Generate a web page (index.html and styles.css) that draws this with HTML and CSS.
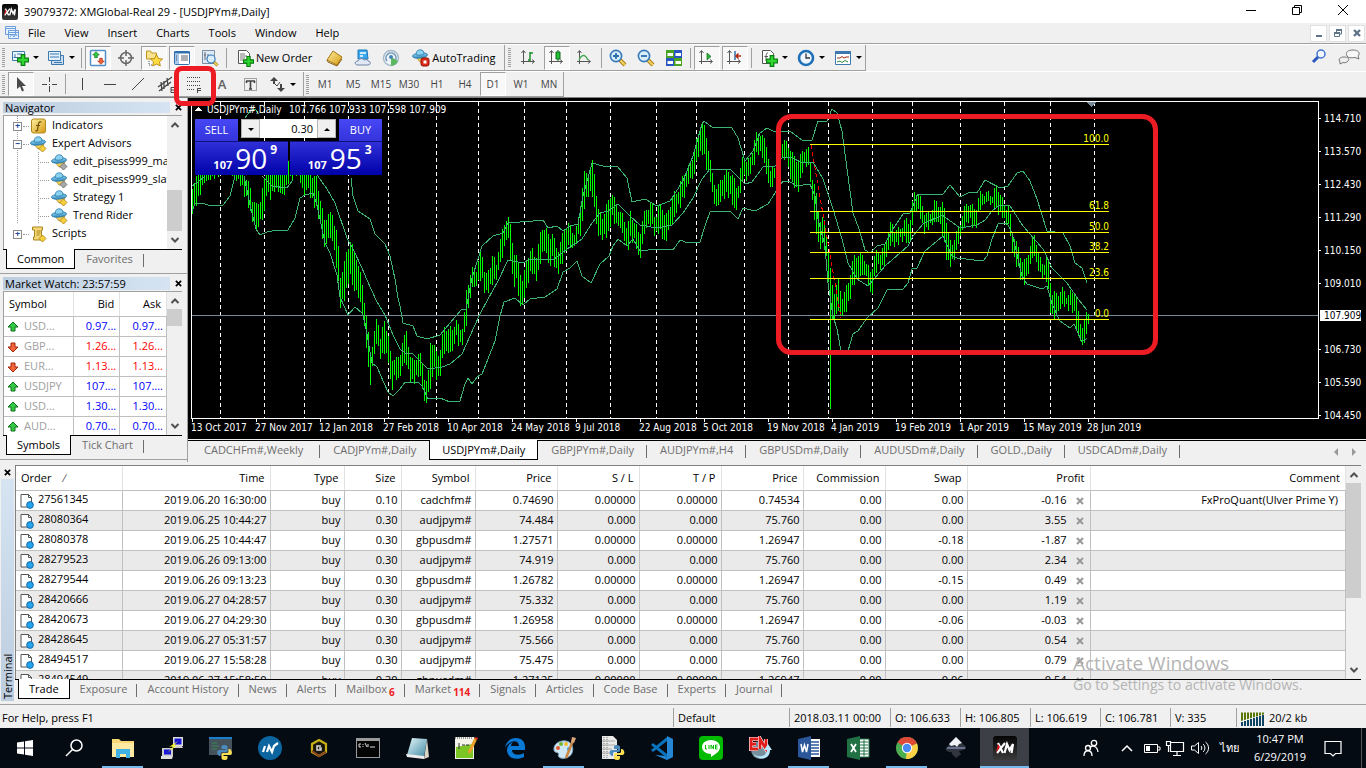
FILE: index.html
```html
<!DOCTYPE html>
<html lang="en">
<head>
	<meta charset="UTF-8">
	<title>39079372: XMGlobal-Real 29 - [USDJPYm#,Daily]</title>
	<link rel="stylesheet" href="styles.css">
</head>
<body>
	<svg class="defs" aria-hidden="true">
		<defs>
			<linearGradient id="g-blue" x2="0" y2="1"><stop offset="0" stop-color="#9bdcf7"/><stop offset="1" stop-color="#2f86bd"/></linearGradient>
			<linearGradient id="g-gold" x2="1" y2="1"><stop offset="0" stop-color="#fdf0a0"/><stop offset="1" stop-color="#d69a12"/></linearGradient>
			<linearGradient id="g-glass" x2="1" y2="1"><stop offset="0" stop-color="#e8f7fc"/><stop offset="1" stop-color="#3e8ba3"/></linearGradient>
			<linearGradient id="g-dark" x2="0" y2="1"><stop offset="0" stop-color="#050505"/><stop offset="1" stop-color="#3a3a3a"/></linearGradient>
		</defs>
		<symbol id="plus" viewBox="0 0 10 10"><path d="M3.500.5h3v3h3v3h-3v3h-3v-3h-3v-3h3z" fill="#2ed82e" stroke="#0b7d12"/></symbol>
		<symbol id="hat" viewBox="0 0 17 16">
			<path d="M4 8l4 5h3l3-5z" fill="#f3cf58" stroke="#a87c16" stroke-width=".7"/>
			<ellipse cx="8" cy="6.500" rx="7.600" ry="2.600" transform="rotate(-6 8 6.500)" fill="url(#g-blue)" stroke="#2477a8" stroke-width=".8"/>
			<path d="M4.300 5.800C4 2 6 .8 8.300.8S12 2 12 5c-2 1.300-6 1.500-7.700.8z" fill="#8bd2f1" stroke="#2477a8" stroke-width=".8"/>
		</symbol>
		<symbol id="hat-gold" viewBox="0 0 17 16"><use href="#hat"/><path d="M12.500 9l3.500 3.500-3.500 3.500L9 12.500z" fill="#f6d13c" stroke="#a67c12" stroke-width=".8"/></symbol>
		<symbol id="hat-gray" viewBox="0 0 17 16"><use href="#hat"/><path d="M12.500 9l3.500 3.500-3.500 3.500L9 12.500z" fill="#a9a9a9" stroke="#666" stroke-width=".8"/></symbol>
		<symbol id="lens" viewBox="0 0 18 18">
			<path d="M11 11l5 5" stroke="#a87a10" stroke-width="4"/><path d="M11 11l5 5" stroke="#f3d261" stroke-width="2.200"/>
			<circle cx="7" cy="7" r="5.600" fill="#d9eefb" stroke="#3579ba" stroke-width="1.600"/>
		</symbol>
		<symbol id="axes" viewBox="0 0 16 16"><path d="M3.500 2v13M1 12.500h13M1.500 4l2-2.500 2 2.500M12 10.500l2.500 2-2.500 2" fill="none" stroke="#555"/></symbol>
		<symbol id="up" viewBox="0 0 12 12"><path d="M6 1l5 5H8v4H4V6H1z" fill="#35c943" stroke="#08711b"/></symbol>
		<symbol id="down" viewBox="0 0 12 12"><path d="M6 11L1 6h3V2h4v4h3z" fill="#f4663a" stroke="#a12408"/></symbol>
		<symbol id="doc" viewBox="0 0 16 16">
			<path d="M2 1.500h7.500l3 3V14H2z" fill="#fff" stroke="#555"/><path d="M9.500 1.500v3h3" fill="none" stroke="#555"/>
			<circle cx="11" cy="12" r="3.400" fill="#27a3ee" stroke="#0c5d98" stroke-width=".8"/>
		</symbol>
		<symbol id="x" viewBox="0 0 8 8"><path d="M1 1l6 6M7 1L1 7" stroke="currentColor" stroke-width="2"/></symbol>
		<symbol id="chev-up" viewBox="0 0 10 8"><path d="M1.500 6L5 2.500 8.500 6" fill="none" stroke="#505050" stroke-width="2"/></symbol>
		<symbol id="chev-down" viewBox="0 0 10 8"><path d="M1.500 2L5 5.500 8.500 2" fill="none" stroke="#505050" stroke-width="2"/></symbol>
		<symbol id="python" viewBox="0 0 16 16">
			<path d="M8 1c-3 0-3 1-3 3v1h4v1H3C1 6 0 8 1 10s2 2 3 2V9.500C4 8 5 8 6 8h3c2 0 2-1 2-2V3c0-1-1-2-3-2z" fill="#4b8bbe"/>
			<path d="M8 16c3 0 3-1 3-3v-1H7v-1h6c2 0 3-2 2-4s-2-2-3-2v2.500C12 9 11 9 10 9H7c-2 0-2 1-2 2v3c0 1 1 2 3 2z" fill="#ffe052"/>
		</symbol>
		<symbol id="xm" viewBox="0 0 24 24">
			<rect width="24" height="24" rx="3" fill="url(#g-dark)"/>
			<path d="M5 7l5 10M12 7L4 17" stroke="#fff" stroke-width="2.200"/><path d="M3 17L5 8l2 3z" fill="#e0161e"/>
			<path d="M11.500 17L14 8l2.500 6L20 8l-1.500 9" fill="none" stroke="#fff" stroke-width="2.200"/>
		</symbol>
	</svg>

	<header class="titlebar">
		<svg class="i16"><use href="#xm"/></svg>
		<h1>39079372: XMGlobal-Real 29 - [USDJPYm#,Daily]</h1>
		<button aria-label="Minimize"><svg viewBox="0 0 12 12"><path d="M1 6.500h10" stroke="#000"/></svg></button>
		<button aria-label="Restore"><svg viewBox="0 0 12 12"><path d="M1.500 3.500h7v7h-7zM3.500 3V1.500h7v7H9" fill="none" stroke="#000"/></svg></button>
		<button aria-label="Close"><svg viewBox="0 0 12 12"><path d="M1 1l10 10M11 1L1 11" stroke="#000"/></svg></button>
	</header>

	<nav class="menubar">
		<svg class="i16" viewBox="0 0 16 16"><path d="M1.500 1.500h10v8h-10zM4.500 5.500h10v8h-10z" fill="#e8f2fd" stroke="#6d9fde"/><path d="M1.500 3.500h10M4.500 7.500h10M6 12l2-3 2 3 2-3 1 2" fill="none" stroke="#6d9fde"/></svg>
		<button>File</button><button>View</button><button>Insert</button><button>Charts</button><button>Tools</button><button>Window</button><button>Help</button>
		<span class="child-controls">
			<button aria-label="Minimize chart"><svg viewBox="0 0 10 10"><path d="M2 8h6" stroke="#5f7488" stroke-width="2"/></svg></button>
			<button aria-label="Restore chart"><svg viewBox="0 0 10 10"><path d="M1.500 4.500h5v4h-5zM3.500 4V2h5v4H7" fill="none" stroke="#5f7488"/><path d="M1 5h6M3 2h6" stroke="#5f7488" stroke-width="2"/></svg></button>
			<button aria-label="Close chart"><svg viewBox="0 0 10 10"><path d="M2 2l6 6M8 2L2 8" stroke="#5f7488" stroke-width="2.400"/></svg></button>
		</span>
	</nav>

	<div class="toolbar">
		<div class="group">
			<i class="grip"></i>
			<button class="drop" aria-label="New chart"><svg viewBox="0 0 18 18"><path d="M1.500 2.500h12v9h-12z" fill="#eef6fd" stroke="#3d79ae"/><path d="M4 5v4M2.500 8.500H11M6 5h5" stroke="#3d79ae"/><use href="#plus" x="6" y="5" width="12" height="12"/></svg></button>
			<button class="drop" aria-label="Profiles"><svg viewBox="0 0 18 18"><path d="M4.500 6.500h12v9h-12z" fill="#c9def1" stroke="#3d79ae"/><path d="M1.500 2.500h12v9h-12z" fill="#e4f1fc" stroke="#3d79ae"/><path d="M3 5h9M3 8h9M7 13.500h8" stroke="#3d79ae"/></svg></button>
			<i class="sep"></i>
			<button class="on" aria-label="Market Watch"><svg viewBox="0 0 18 18"><rect x="1.500" y="1.500" width="15" height="15" rx="1" fill="#fff" stroke="#4f8fca" stroke-width="1.500"/><use href="#up" x="3" y="2" width="8" height="8"/><use href="#down" x="8" y="8" width="8" height="8"/></svg></button>
			<button aria-label="Data Window"><svg viewBox="0 0 18 18"><circle cx="9" cy="9" r="5.500" fill="none" stroke="#666" stroke-width="1.500"/><path d="M9 1v6M9 11v6M1 9h6M11 9h6" stroke="#666" stroke-width="1.500"/></svg></button>
			<button class="on" aria-label="Navigator"><svg viewBox="0 0 18 18"><path d="M1.500 2v8h10V4h-5l-1-2z" fill="#f9e48d" stroke="#bd9522"/><path d="M4 12v4M4 16h3" stroke="#555" stroke-dasharray="1 1"/><path d="M11.500 5.500l2 4 4 .5-3 2.800.8 4.200-3.800-2-3.800 2 .8-4.200-3-2.800 4-.5z" fill="#ffd942" stroke="#b28812" stroke-width=".9"/></svg></button>
			<button class="on" aria-label="Terminal"><svg viewBox="0 0 18 18"><rect x="1.500" y="2.500" width="15" height="13" rx="1" fill="#fff" stroke="#2f6fae"/><path d="M1 3.500h16" stroke="#2f6fae" stroke-width="2"/><path d="M2 5h4v10H2z" fill="#a9c8ea"/><path d="M3 7h1M3 9h1M3 11h1M8 7h7M8 9h7M8 11h7" stroke="#334" stroke-width=".8"/></svg></button>
			<button aria-label="Strategy Tester"><svg viewBox="0 0 18 18"><path d="M1.500 1.500h12v13h-12z" fill="#dde9f4" stroke="#7b8fa3"/><path d="M4 3v8M7 5v7M3 6h2M6 8h2" stroke="#667"/><use href="#lens" x="5" y="5" width="13" height="13"/></svg></button>
			<i class="sep"></i>
			<button class="wide"><svg viewBox="0 0 18 18"><path d="M2.500 1.500h8l3 3v10h-11z" fill="#fff" stroke="#555"/><path d="M4 5h5M4 7h7M4 9h5M4 11h3" stroke="#777"/><use href="#plus" x="7" y="7" width="11" height="11"/></svg>New Order</button>
			<button aria-label="MetaEditor"><svg viewBox="0 0 18 18"><path d="M1 11L7 2l9 6-5 8z" fill="url(#g-gold)" stroke="#a87713"/><path d="M1 11l1 2 9 4 5-7" fill="none" stroke="#8b5e0a"/></svg></button>
			<button aria-label="MQL5 cloud"><svg viewBox="0 0 18 18"><path d="M4 1h9l1 9H4z" fill="#3aa8ef" stroke="#1c78b8"/><path d="M6 4h6M6 7h3" stroke="#fff" stroke-width="1.500"/><path d="M3 16c-3-1-2-4 1-4 1-3 5-3 6-1 3-1 4 0 4 1 3 0 3 4 0 4z" fill="#dfe8f4" stroke="#6d83a3"/></svg></button>
			<button aria-label="Signals"><svg viewBox="0 0 18 18"><circle cx="9" cy="9" r="7.500" fill="#edf3f7" stroke="#a5b8c8" stroke-width="1.400"/><path d="M5 12a5 5 0 1 1 8 0" fill="none" stroke="#6e93b1" stroke-width="1.500"/><path d="M9 8v9a8 8 0 0 0 7-5z" fill="#5cb860"/><circle cx="9" cy="8" r="2" fill="#4585b5"/></svg></button>
			<button class="wide"><svg viewBox="0 0 18 18"><use href="#hat" width="17" height="16"/><rect x="9" y="9" width="8" height="8" rx="2" fill="#dc2a18" stroke="#991008"/><path d="M11.500 11.500h3v3h-3z" fill="#fff"/></svg>AutoTrading</button>
		</div>
		<div class="group chart-tools">
			<i class="grip"></i>
			<button aria-label="Bar chart"><svg viewBox="0 0 18 18"><use href="#axes" width="16" height="16"/><path d="M10 3v9M10 4h3M8 11h2" stroke="#1b8a2a" stroke-width="1.500"/></svg></button>
			<button class="on" aria-label="Candlesticks"><svg viewBox="0 0 18 18"><use href="#axes" width="16" height="16"/><path d="M10 1v11" stroke="#11671d"/><path d="M8 3h4v7H8z" fill="#21c435" stroke="#11671d"/></svg></button>
			<button aria-label="Line chart"><svg viewBox="0 0 18 18"><use href="#axes" width="16" height="16"/><path d="M3 11c3-6 6-6 9 0" fill="none" stroke="#46a852" stroke-width="1.400"/></svg></button>
			<i class="sep"></i>
			<button aria-label="Zoom in"><svg viewBox="0 0 18 18"><use href="#lens"/><path d="M4 7h6M7 4v6" stroke="#2c6ead" stroke-width="1.800"/></svg></button>
			<button aria-label="Zoom out"><svg viewBox="0 0 18 18"><use href="#lens"/><path d="M4 7h6" stroke="#2c6ead" stroke-width="1.800"/></svg></button>
			<button aria-label="Tile windows"><svg viewBox="0 0 18 18"><path d="M1 1h8v8H1zM9 9h8v8H9z" fill="#4ba322"/><path d="M9 1h8v8H9zM1 9h8v8H1z" fill="#2855c0"/><path d="M2.500 4H8v3H2.500zM10.500 4H16v3h-5.500zM2.500 12H8v3H2.500zM10.500 12H16v3h-5.500z" fill="#fff"/></svg></button>
			<i class="sep"></i>
			<button class="on" aria-label="Auto scroll"><svg viewBox="0 0 18 18"><use href="#axes" width="16" height="16"/><path d="M9 4v7l4-3.500z" fill="#29b83c" stroke="#11671d" stroke-width=".7"/></svg></button>
			<button class="on" aria-label="Chart shift"><svg viewBox="0 0 18 18"><use href="#axes" width="16" height="16"/><path d="M9 2v9" stroke="#2c6ead" stroke-width="1.500"/><path d="M15 7h-5M12.500 4.500L10 7l2.500 2.500" fill="none" stroke="#b5250b" stroke-width="1.500"/></svg></button>
			<i class="sep"></i>
			<button class="drop" aria-label="Indicators"><svg viewBox="0 0 18 18"><path d="M2.500 1.500h8l3 3v10h-11z" fill="#fff" stroke="#555"/><path d="M8 4c-2 0-2 1-2 8M4.500 7.500H8" fill="none" stroke="#555"/><use href="#plus" x="6" y="6" width="12" height="12"/></svg></button>
			<button class="drop" aria-label="Periods"><svg viewBox="0 0 18 18"><circle cx="9" cy="9" r="7" fill="#eef5fc" stroke="#1e6fb8" stroke-width="2.600"/><path d="M9 4.500V9h4" fill="none" stroke="#333" stroke-width="1.300"/></svg></button>
			<button class="drop" aria-label="Templates"><svg viewBox="0 0 18 18"><path d="M1.500 2.500h15v13h-15z" fill="#fff" stroke="#3d79ae"/><path d="M1 3.500h16" stroke="#3d79ae" stroke-width="3"/><path d="M3 9h3l2-1.500L10 9l2-1h3" fill="none" stroke="#a02b12"/><path d="M3 13l3-1 2 1.500 3-2 3 1.500" fill="none" stroke="#2a8a38"/></svg></button>
		</div>
		<span class="search-tools">
			<button aria-label="Search"><svg viewBox="0 0 18 18"><circle cx="11" cy="6" r="4" fill="#f4f8ff" stroke="#4173d2" stroke-width="1.500"/><path d="M8 9l-5 5" stroke="#2b56bb" stroke-width="3"/></svg></button>
			<button class="chat" aria-label="Chat"><svg viewBox="0 0 22 18"><path d="M9 8c-2-4 1-6 6-6s8 3 5 6l1 3-4-1.500c-4 .5-7 .5-8-1.500z" fill="#f8f8f8" stroke="#777"/><path d="M2 14c-2-3 0-5 4-5s6 2 4 4-4 2-5 1.500L2 16z" fill="#eee" stroke="#777"/></svg></button>
		</span>
	</div>

	<div class="toolbar drawing">
		<div class="group">
			<i class="grip"></i>
			<button class="on" aria-label="Cursor"><svg viewBox="0 0 18 18"><path d="M5 2v12l3-2.500 2 5 2-1-2-4.500h4z" fill="#4a4a4a"/></svg></button>
			<button aria-label="Crosshair"><svg viewBox="0 0 18 18"><path d="M9.500 2v5M9.500 11v6M2 9.500h5M12 9.500h5M9 9.500h1" stroke="#444"/></svg></button>
			<i class="sep"></i>
			<button aria-label="Vertical line"><svg viewBox="0 0 18 18"><path d="M9.500 3v12" stroke="#444"/></svg></button>
			<button aria-label="Horizontal line"><svg viewBox="0 0 18 18"><path d="M3 9.500h12" stroke="#444"/></svg></button>
			<button aria-label="Trendline"><svg viewBox="0 0 18 18"><path d="M3 15L15 3" stroke="#444"/></svg></button>
			<button aria-label="Channel"><svg viewBox="0 0 18 18"><path d="M1 12L15 2M2 16L14 7M4 7l1 9M7 6v8M10 3l1 8" stroke="#444" stroke-width="1.300" fill="none"/><path d="M17 12.500h-3v5h3M14 15h3" stroke="#444" fill="none"/></svg></button>
			<button class="marked" aria-label="Fibonacci retracement"><svg viewBox="0 0 18 18"><path d="M2 2.500h14M2 6.500h14M2 10.500h14M2 14.500h8" stroke="#444" stroke-dasharray="1 1"/><path d="M16 13.500h-3.500v4.500M13 15.500h3" fill="none" stroke="#444"/></svg></button>
			<button class="letter">A</button>
			<button class="label-tool" aria-label="Text label"><svg viewBox="0 0 18 18"><path d="M3.500 3.500h12v12h-12z" fill="none" stroke="#555" stroke-dasharray="1 1"/><path d="M5 6h9M9.500 6v8M5.500 6v2M13.500 6v2M8 14h3" stroke="#444" stroke-width="1.600"/></svg></button>
			<button class="drop" aria-label="Arrows"><svg viewBox="0 0 18 18"><path d="M2 6l4-4 4 4H7v3H5V6zM9 13h3V9h2v4h3l-4 4z" fill="#444"/><path d="M7 9l2 2 3-4" fill="none" stroke="#444"/></svg></button>
		</div>
		<div class="group">
			<i class="grip"></i>
			<button>M1</button><button>M5</button><button>M15</button><button>M30</button><button>H1</button><button>H4</button><button class="on">D1</button><button>W1</button><button>MN</button>
		</div>
	</div>

	<main class="workspace">
		<aside class="dock">
			<section class="panel navigator">
				<div class="caption"><h2>Navigator</h2><button aria-label="Close Navigator"><svg><use href="#x"/></svg></button></div>
				<div class="panel-body">
					<ul class="tree">
						<li><b class="box">+</b><svg viewBox="0 0 16 16"><rect x="1" y="1" width="14" height="14" rx="2" fill="url(#g-gold)" stroke="#b18a1c"/><path d="M11 4c-3-1-3 1-4 8-.4 1-1 1-2 .6M5.500 7.500h4" fill="none" stroke="#6d5208" stroke-width="1.200"/></svg>Indicators</li>
						<li><b class="box">−</b><svg><use href="#hat-gold"/></svg>Expert Advisors
							<ul>
								<li><svg><use href="#hat-gray"/></svg>edit_pisess999_macd</li>
								<li><svg><use href="#hat-gray"/></svg>edit_pisess999_slave</li>
								<li><svg><use href="#hat-gold"/></svg>Strategy 1</li>
								<li><svg><use href="#hat-gold"/></svg>Trend Rider</li>
							</ul>
						</li>
						<li><b class="box">+</b><svg viewBox="0 0 16 16"><path d="M2 1h10v3h-1v7h2v3H3v-3h1V4H2z" fill="#f5d873" stroke="#a98422"/><path d="M6 5h4M6 7h4M6 9h3" stroke="#a98422"/><path d="M12 9l3.500 3.500L12 16l-3.500-3.500z" fill="#f6d13c" stroke="#a67c12" stroke-width=".8"/></svg>Scripts</li>
					</ul>
					<div class="scroll nav-scroll"><svg><use href="#chev-up"/></svg><i></i><svg><use href="#chev-down"/></svg></div>
				</div>
				<div class="tabs"><button class="active">Common</button><button>Favorites</button></div>
			</section>
			<section class="panel market">
				<div class="caption"><h2>Market Watch: 23:57:59</h2><button aria-label="Close Market Watch"><svg><use href="#x"/></svg></button></div>
				<div class="panel-body">
					<div class="clip">
						<table class="quotes">
							<thead><tr><th>Symbol</th><th>Bid</th><th>Ask</th></tr></thead>
							<tbody id="quotes"></tbody>
						</table>
					</div>
					<div class="scroll mw-scroll"><svg><use href="#chev-up"/></svg><i></i><svg><use href="#chev-down"/></svg></div>
				</div>
				<div class="tabs"><button class="active">Symbols</button><button>Tick Chart</button></div>
			</section>
		</aside>

		<section class="chart-area">
			<div class="chart">
				<svg id="chart" viewBox="189 98 1177 341" preserveAspectRatio="xMinYMin meet" role="img" aria-label="USDJPYm# daily chart"></svg>
				<div class="one-click">
					<button class="side">SELL</button>
					<div class="lots">
						<button aria-label="Less"><svg viewBox="0 0 6 3"><path d="M0 0h6L3 3z"/></svg></button><input type="text" value="0.30" aria-label="Volume"><button aria-label="More"><svg viewBox="0 0 6 3"><path d="M0 3h6L3 0z"/></svg></button>
					</div>
					<button class="side">BUY</button>
					<div class="prices">
						<button><b>107</b><span>90</span><sup>9</sup></button>
						<button><b>107</b><span>95</span><sup>3</sup></button>
					</div>
				</div>
			</div>
			<div class="tabs chart-tabs">
				<button>CADCHFm#,Weekly</button><button class="before">CADJPYm#,Daily</button><button class="active">USDJPYm#,Daily</button><button>GBPJPYm#,Daily</button><button>AUDJPYm#,H4</button><button>GBPUSDm#,Daily</button><button>AUDUSDm#,Daily</button><button>GOLD.,Daily</button><button>USDCADm#,Daily</button>
				<span class="pager">
					<button aria-label="Previous tab"><svg viewBox="0 0 5 8"><path d="M5 0v8L1 4z" fill="#999"/></svg></button>
					<button aria-label="Next tab"><svg viewBox="0 0 5 8"><path d="M0 0v8l4-4z" fill="#999"/></svg></button>
				</span>
			</div>
		</section>
	</main>

	<section class="terminal">
		<div class="spine"><button aria-label="Close Terminal"><svg><use href="#x"/></svg></button><h2>Terminal</h2></div>
		<div class="terminal-main">
			<div class="orders-wrap">
				<div class="clip">
					<table class="orders">
						<colgroup><col class="c-order"><col class="c-time"><col class="c-type"><col class="c-size"><col class="c-type"><col class="c-num"><col class="c-num"><col class="c-num"><col class="c-num"><col class="c-num"><col class="c-num"><col class="c-profit"><col></colgroup>
						<thead><tr><th>Order <i>∕</i></th><th>Time</th><th>Type</th><th>Size</th><th>Symbol</th><th>Price</th><th>S / L</th><th>T / P</th><th>Price</th><th>Commission</th><th>Swap</th><th>Profit</th><th>Comment</th></tr></thead>
						<tbody id="orders"></tbody>
					</table>
				</div>
				<div class="scroll term-scroll"><svg><use href="#chev-up"/></svg><i></i><svg><use href="#chev-down"/></svg></div>
			</div>
			<div class="tabs">
				<button class="active">Trade</button><button>Exposure</button><button>Account History</button><button>News</button><button>Alerts</button><button>Mailbox<sub>6</sub></button><button>Market<sub>114</sub></button><button>Signals</button><button>Articles</button><button>Code Base</button><button>Experts</button><button>Journal</button>
			</div>
			<div class="watermark"><p>Activate Windows</p><p>Go to Settings to activate Windows.</p></div>
		</div>
	</section>

	<footer class="statusbar">
		<span class="help">For Help, press F1</span>
		<span class="profile">Default</span>
		<span class="time">2018.03.11 00:00</span>
		<span class="ohlc">O: 106.633</span>
		<span class="ohlc">H: 106.805</span>
		<span class="ohlc">L: 106.619</span>
		<span class="ohlc">C: 106.781</span>
		<span class="vol">V: 335</span>
		<span class="traffic"><svg viewBox="0 0 24 14"><path d="M0 5h23" stroke="#577700" stroke-width="9" stroke-dasharray="2 1"/><path d="M0 9L24 2v12H0z" fill="#f0f0f0"/><path d="M1 14V10M4 14V9M7 14V8M10 14V7M13 14V6M16 14V5M19 14V4M22 14V3" stroke="#0e4463" stroke-width="2"/></svg>20/2 kb</span>
	</footer>

	<nav class="taskbar">
		<button aria-label="Start"><svg viewBox="0 0 24 24"><path d="M4 6.500l7-1v6H4zM12 5.300l8-1.300v7.500h-8zM4 12.500h7v6l-7-1zM12 12.500h8V20l-8-1.300z" fill="#fff"/></svg></button>
		<button aria-label="Search"><svg viewBox="0 0 24 24"><circle cx="14.500" cy="9.500" r="5.500" fill="none" stroke="#fff" stroke-width="1.500"/><path d="M10.500 13.500L4 20" stroke="#fff" stroke-width="1.500"/></svg></button>
		<button class="run" aria-label="File Explorer"><svg viewBox="0 0 24 24"><path d="M1 3h7l2 2h13v16H1z" fill="#f7d774"/><path d="M1 7h22v14H1z" fill="#ffe9a2"/><path d="M5 22v-9h14v9h-4v-4H9v4z" fill="#3fb1e5"/></svg></button>
		<button aria-label="PuTTY"><svg viewBox="0 0 24 24"><path d="M13 1h10v9H13z" fill="#ddd"/><path d="M14.500 2.500h7v6h-7z" fill="#1717d5"/><path d="M12 10h10l1 2H13zM2 12h11v8H2z" fill="#ccc"/><path d="M4 13.500h7v5H4z" fill="#1717d5"/><path d="M1 20h12l-1 3H1z" fill="#ddd"/><path d="M18 5l-9 6 5-1-7 7 10-8-4 1z" fill="#ff0"/></svg></button>
		<button aria-label="Python IDE"><svg viewBox="0 0 24 24"><path d="M0 1h23v18H0z" fill="#45525b"/><path d="M0 1h23v2H0z" fill="#1681d0"/><path d="M3 7h5M3 10h7M3 13h5" stroke="#348a50"/><use href="#python" x="7" y="8" width="17" height="16"/></svg></button>
		<button aria-label="Network"><svg viewBox="0 0 24 24"><circle cx="12" cy="12" r="12" fill="#0c659f"/><path d="M5 16l2-6M9 16l2-6 3 6 2-6 4-3" fill="none" stroke="#fff" stroke-width="2.200"/></svg></button>
		<button aria-label="Wallet"><svg viewBox="0 0 24 24"><path d="M12 4l7 4v8l-7 4-7-4V8z" fill="#18150c" stroke="#c7b014" stroke-width="2.200"/><path d="M5 15l7 5 7-4" fill="none" stroke="#8a4220" stroke-width="2"/><path d="M14 10h-4v4h4v-2h-2" fill="none" stroke="#ddd" stroke-width="1.500"/></svg></button>
		<button aria-label="Command Prompt"><svg viewBox="0 0 24 24"><path d="M0 2h24v20H0z" fill="#9b9b9b"/><path d="M1 5h22v16H1z" fill="#050505"/><path d="M5 8H3v3h2M7 8v1M7 10v1M9 7l2 4M12 8v3M14 11h5" fill="none" stroke="#ddd"/></svg></button>
		<button aria-label="Notepad"><svg viewBox="0 0 24 24"><path d="M7 2l15 1-3 18-17-2z" fill="url(#g-glass)"/><path d="M22 3l2 18-5 2z" fill="#d9d6c7"/><path d="M1 18l18 2v3L2 21z" fill="#eee"/></svg></button>
		<button aria-label="Notepad++"><svg viewBox="0 0 24 24"><path d="M1 1h19v22H1z" fill="#f3f3e9"/><path d="M2 11l17-3v14H2z" fill="#7bc625"/><path d="M1 2h18" stroke="#999" stroke-width="2" stroke-dasharray="1 1"/><path d="M5 7v6M8 9h3M12 9h3" stroke="#333"/><path d="M22 2l-7 15" stroke="#e8a12b" stroke-width="3"/><path d="M22 1l2 1-1 2-2-1z" fill="#d22"/></svg></button>
		<button aria-label="Edge"><svg viewBox="0 0 24 24"><path d="M2 12C3 5 8 2 13 2c6 0 9 4 9 9v3H9c0 5 7 6 12 3v4c-8 4-17 1-17-7 0-4 3-7 6-8-1 1-2 3-2 4h8c0-6-9-7-14 2z" fill="#0a78d5"/></svg></button>
		<button class="run" aria-label="Paint"><svg viewBox="0 0 24 24"><path d="M2 14C1 8 8 4 14 5s8 7 6 12-10 7-13 4c-2-2 1-3-1-4s-4-1-4-3z" fill="#cfe6f4" stroke="#7da2ba"/><circle cx="6" cy="12" r="2" fill="#df5a32"/><circle cx="9" cy="8" r="2" fill="#71b735"/><circle cx="14" cy="8" r="2" fill="#f1bc31"/><circle cx="17" cy="13" r="2" fill="#369dd8"/><path d="M22 2l-8 20" stroke="#c98641" stroke-width="2.500"/><path d="M20 1l4 1-2 5-3-1z" fill="#dca778"/></svg></button>
		<button aria-label="Python"><svg viewBox="0 0 24 24"><path d="M1 0h11l4 4v19H1z" fill="#e9e9e9"/><path d="M3 1v21M6 1v21" stroke="#777" stroke-dasharray="1 1"/><path d="M1 5h13M1 9h13M1 13h10M1 17h9" stroke="#aaa"/><use href="#python" x="8" y="8" width="16" height="16"/></svg></button>
		<button aria-label="Visual Studio Code"><svg viewBox="0 0 24 24"><path d="M17 0l6 3v18l-6 3L5 19l12 1z" fill="#2587d3"/><path d="M17 5L3 16l-2-2L17 1zM1 9l2-2 14 11v4z" fill="#0a73bd"/></svg></button>
		<button aria-label="LINE"><svg viewBox="0 0 24 24"><rect width="24" height="24" rx="4" fill="#00ba00"/><path d="M12 4c5 0 9 3 9 7s-4 7-9 10v-3c-5 0-9-3-9-7s4-7 9-7z" fill="#fff"/><path d="M6.500 9v4H8M10 9v4M12 13V9l2.500 4V9M18.500 9h-2v4h2M16.500 11h2" fill="none" stroke="#00ba00"/></svg></button>
		<button aria-label="EN dictionary"><svg viewBox="0 0 24 24"><circle cx="12" cy="14" r="9" fill="#75909c"/><path d="M10 3H3v10h7M3 8h5M12 13V3l6 10V3" fill="none" stroke="#fff" stroke-width="4"/><path d="M10 3H3v10h7M3 8h5M12 13V3l6 10V3" fill="none" stroke="#df1d1d" stroke-width="2.800"/><path d="M5 18c8 5 14 1 14-4h-3l4-6 4 6h-2c0 10-11 11-17 4z" fill="#b8e6fa"/></svg></button>
		<button class="run" aria-label="Word"><svg viewBox="0 0 24 24"><path d="M12 3h11v18H12z" fill="#fff"/><path d="M14 6h8M14 9h8M14 12h8M14 15h8M14 18h8" stroke="#2b579a" stroke-width="1.500"/><path d="M1 3l13-3v24L1 21z" fill="#2b579a"/><path d="M4 8l1.500 8L7.500 9l2 7L11 8" fill="none" stroke="#fff" stroke-width="1.500"/></svg></button>
		<button aria-label="Excel"><svg viewBox="0 0 24 24"><path d="M12 3h11v18H12z" fill="#fff" stroke="#207245"/><path d="M14 6h8M14 9h8M14 12h8M14 15h8M14 18h8M18 4v16" stroke="#207245"/><path d="M1 3l13-3v24L1 21z" fill="#207245"/><path d="M5 8l5 8M10 8l-5 8" stroke="#fff" stroke-width="1.800"/></svg></button>
		<button class="run" aria-label="Chrome"><svg viewBox="0 0 24 24"><circle cx="12" cy="12" r="11" fill="#4cae50"/><path d="M12 12L2.500 6.500A11 11 0 0 1 22 7.500z" fill="#df4938"/><path d="M12 12L22 7.500C25 16 19 23 11 23z" fill="#fcd146"/><circle cx="12" cy="12" r="5.200" fill="#fff"/><circle cx="12" cy="12" r="4.200" fill="#4a8af4"/></svg></button>
		<button aria-label="Inkscape"><svg viewBox="0 0 24 24"><path d="M12 1l10 10c1 3-4 3-7 4 0 2 4 3 1 4l-4 3-3-3c-2-1 0-2-2-3-4 0-6-2-5-4z" fill="#30353f"/><path d="M12 1l6 6-3 1-2 3-2-2-4 1-2-2z" fill="#eef1f5"/><path d="M3 12h18" stroke="#67718c" stroke-width="2"/></svg></button>
		<button class="run current" aria-label="MetaTrader"><svg><use href="#xm"/></svg></button>
		<span class="tray">
			<button aria-label="People"><svg viewBox="0 0 20 20"><path d="M3 18c0-7 8-7 8 0M9 10c1-3 7-3 8 4" fill="none" stroke="#fff" stroke-width="1.300"/><circle cx="7" cy="10" r="2.500" fill="none" stroke="#fff" stroke-width="1.300"/><circle cx="13" cy="5" r="2.700" fill="none" stroke="#fff" stroke-width="1.300"/></svg></button>
			<button aria-label="Hidden icons"><svg viewBox="0 0 20 20"><path d="M5 13l5-5 5 5" fill="none" stroke="#fff" stroke-width="1.500"/></svg></button>
			<button aria-label="Battery"><svg viewBox="0 0 20 20"><path d="M3.500 6.500h13v8h-13zM17 9h2v3h-2" fill="none" stroke="#fff"/><path d="M5 8h4v5H5z" fill="#fff"/></svg></button>
			<button aria-label="Network"><svg viewBox="0 0 20 20"><path d="M6 4.500h12.500v9H5.500V8M12 14v3M8 17.500h8M1.500 3.500h4v4h-4zM3.500 8v6" fill="none" stroke="#fff" stroke-width="1.200"/></svg></button>
			<button aria-label="Volume"><svg viewBox="0 0 20 20"><path d="M2.500 8h3l4-3.500v11L5.500 12h-3z" fill="none" stroke="#fff"/><path d="M12 8c1 1 1 3 0 4M14 6c2.500 2 2.500 6 0 8M16.500 4c4 3 4 9 0 12" fill="none" stroke="#fff"/></svg></button>
			<button class="lang">ไทย</button>
			<button class="clock"><span>10:47 PM</span><span>6/29/2019</span></button>
			<button class="notes" aria-label="Notifications"><svg viewBox="0 0 20 20"><path d="M2 3.500h16v12h-5.500L10 18l-2.500-2.500H2z" fill="none" stroke="#fff" stroke-width="1.200"/></svg></button>
		</span>
	</nav>
	<script src="script.js"></script>
</body>
</html>
```
FILE: styles.css
```css
* {
	margin: 0;
	padding: 0;
	box-sizing: border-box;
}
body {
	height: 100vh;
	display: flex;
	flex-direction: column;
	overflow: hidden;
	background: #f0f0f0;
	color: #000;
	font: 11px/16px "Open Sans", "Noto Sans", sans-serif;
}
button, input {
	font: inherit;
	color: inherit;
	border: 0;
	background: none;
}
h1, h2 {
	font-size: inherit;
	font-weight: normal;
}
ul {
	list-style: none;
}
.defs {
	position: absolute;
	width: 0;
	height: 0;
}
.i16 {
	width: 16px;
	height: 16px;
}

/* title and menu */
.titlebar {
	flex: none;
	height: 23px;
	display: flex;
	align-items: center;
	padding-left: 2px;
	background: #fff;
}
.titlebar h1 {
	flex: 1;
	margin-left: 6px;
}
.titlebar button {
	width: 46px;
	height: 20px;
}
.titlebar button svg {
	width: 12px;
	height: 12px;
}
.menubar {
	flex: none;
	height: 21px;
	display: flex;
	align-items: center;
	gap: 1px;
	padding-left: 4px;
	border-bottom: 1px solid #a0a0a0;
}
.menubar > button {
	padding: 0 9px;
}
.menubar > .i16 {
	margin-right: -2px;
}
.child-controls {
	margin-left: auto;
	display: flex;
	gap: 2px;
	padding-right: 1px;
}
.child-controls button {
	width: 17px;
	height: 17px;
	background: #fff;
	border: 1px solid #e0e0e0;
	line-height: 0;
}
.child-controls svg {
	width: 10px;
	height: 10px;
}

/* toolbars */
.toolbar {
	flex: none;
	height: 27px;
	display: flex;
	border-top: 1px solid #fff;
}
.group {
	display: flex;
	align-items: center;
	border-right: 1px solid #a0a0a0;
	border-bottom: 1px solid #a0a0a0;
	padding-left: 2px;
}
.grip {
	width: 3px;
	height: 19px;
	margin-right: 2px;
	background: repeating-linear-gradient(#a0a0a0 0 1px, #f0f0f0 1px 2px);
}
.sep {
	width: 1px;
	height: 20px;
	margin: 0 2px;
	background: #a0a0a0;
}
.toolbar button {
	width: 26px;
	height: 24px;
	margin: 0 1px;
	display: flex;
	align-items: center;
	justify-content: center;
}
.toolbar svg {
	flex: none;
	width: 18px;
	height: 18px;
}
.toolbar .on {
	border: 1px solid #a0a0a0;
	border-right-color: #fff;
	border-bottom-color: #fff;
	background: #f8f8f8;
}
.toolbar .drop {
	width: 34px;
	gap: 4px;
	justify-content: flex-start;
	padding-left: 3px;
}
.drop::after {
	content: "";
	border: 3px solid transparent;
	border-top-color: #000;
	border-bottom: 0;
}
.toolbar .wide {
	width: auto;
	padding: 0 8px 0 6px;
	gap: 2px;
	white-space: nowrap;
}
.chart-tools {
	padding-left: 3px;
}
.chart-tools .grip {
	margin-right: 4px;
}
.toolbar .chart-tools .drop {
	width: 35px;
	padding-left: 5px;
}
.search-tools {
	margin-left: auto;
	display: flex;
	gap: 2px;
	padding-right: 3px;
}
.toolbar .chat svg {
	width: 22px;
}
.drawing {
	border-bottom: 1px solid #808080;
	font-size: 10px;
	color: #444;
}
.toolbar.drawing .drop {
	width: 37px;
}
.drawing .letter {
	font-size: 13px;
	font-weight: 600;
	color: #606060;
}
.marked {
	position: relative;
}
.marked::after {
	content: "";
	position: absolute;
	z-index: 5;
	left: -7px;
	top: -6px;
	width: 32px;
	height: 30px;
	border: 5px solid #ed1c24;
	border-radius: 8px;
}

/* workspace */
.workspace {
	flex: 1;
	min-height: 0;
	display: flex;
}
.dock {
	flex: none;
	width: 188px;
	display: flex;
	flex-direction: column;
	border-right: 1px solid #a0a0a0;
}
.panel {
	display: flex;
	flex-direction: column;
	padding: 2px 5px 2px 3px;
	border-bottom: 1px solid #a0a0a0;
	min-height: 0;
}
.navigator {
	flex: none;
	height: 176px;
}
.navigator .caption {
	line-height: 11px;
}
.market {
	flex: 1;
	margin-bottom: 2px;
}
.caption {
	flex: none;
	display: flex;
	height: 14px;
	line-height: 13px;
	align-items: center;
	margin-bottom: 1px;
}
.caption h2 {
	flex: 1;
	padding-left: 2px;
	background: linear-gradient(90deg, #bccddf, #d6e4f2);
}
.caption button {
	width: 12px;
	line-height: 0;
	text-align: right;
}
.caption svg, .spine svg {
	width: 7px;
	height: 7px;
}
.panel-body {
	flex: 1;
	min-height: 0;
	display: flex;
	background: #fff;
	border-top: 1px solid #a0a0a0;
	border-left: 1px solid #a0a0a0;
	overflow: hidden;
}
.tree {
	flex: 1;
	min-width: 0;
	padding: 0 0 0 9px;
	line-height: 18px;
	overflow: hidden;
	white-space: nowrap;
}
.tree svg {
	width: 17px;
	height: 16px;
	margin: 0 5px 0 8px;
	vertical-align: middle;
}
.tree > li:not(:last-child) {
	background: linear-gradient(#999 1px, transparent 1px) 4px 0 / 1px 2px repeat-y;
}
.tree ul {
	margin-left: 25px;
	background: linear-gradient(#999 1px, transparent 1px) 0 0 / 1px 2px repeat-y;
}
.tree ul li::before {
	content: "";
	display: inline-block;
	width: 11px;
	border-top: 1px dotted #999;
	vertical-align: middle;
}
.tree ul svg {
	margin-left: 2px;
}
.box {
	display: inline-block;
	position: relative;
	width: 9px;
	height: 9px;
	border: 1px solid #8c8c8c;
	background: #fff;
	line-height: 6px;
	font-size: 9px;
	text-align: center;
	color: #26489c;
	vertical-align: middle;
}
.box::after {
	content: "";
	position: absolute;
	left: 9px;
	top: 3px;
	width: 6px;
	border-top: 1px dotted #999;
}
.scroll {
	flex: none;
	width: 15px;
	background: #f0f0f0;
	display: flex;
	flex-direction: column;
	align-items: center;
	padding: 5px 0;
}
.scroll svg {
	flex: none;
	width: 10px;
	height: 8px;
}
.scroll i {
	width: 15px;
	background: #cdcdcd;
	margin-bottom: auto;
}
.nav-scroll i {
	height: 41px;
	margin-top: 61px;
}
.mw-scroll i {
	height: 17px;
	margin-top: 4px;
}
.term-scroll i {
	height: 115px;
	margin-top: 4px;
}
.tabs {
	flex: none;
	height: 22px;
	display: flex;
	border-top: 1px solid #000;
	padding-left: 3px;
	color: #6e6e6e;
	white-space: nowrap;
}
.tabs > button {
	height: 18px;
	padding: 0 11px;
	position: relative;
}
.tabs > button::after {
	content: "";
	position: absolute;
	right: 0;
	top: 4px;
	height: 13px;
	border-right: 1px solid #6e6e6e;
}
.tabs > .before::after {
	content: none;
}
.tabs > .active {
	height: 20px;
	margin-top: -1px;
	background: #fff;
	color: #000;
	border: 1px solid #000;
	border-top: 0;
	padding: 0 10px;
}
.tabs > .active::after {
	content: none;
}
.clip {
	flex: 1;
	min-width: 0;
	overflow: hidden;
}
table {
	width: 100%;
	table-layout: fixed;
	border-collapse: collapse;
}
th {
	height: 24px;
	font-weight: normal;
	text-align: right;
	padding: 0 5px;
	border-right: 1px solid #e2e2e2;
	border-bottom: 1px solid #c0c0c0;
}
td {
	height: 20px;
	text-align: right;
	padding: 0 3px;
	border-right: 1px solid #c0c0c0;
	border-bottom: 1px solid #c0c0c0;
	white-space: nowrap;
	overflow: hidden;
}
th:first-child, td:first-child {
	text-align: left;
}
.quotes th:first-child {
	width: 69px;
}
.quotes td:first-child {
	color: #a0a0a0;
}
.quotes svg {
	width: 12px;
	height: 12px;
	margin-right: 5px;
	vertical-align: -3px;
}
.rise {
	color: #0000ff;
}
.fall {
	color: #ff0000;
}

/* chart */
.chart-area {
	flex: 1;
	min-width: 0;
	display: flex;
	flex-direction: column;
}
.chart {
	flex: 1;
	min-height: 0;
	position: relative;
	background: #000;
	border-left: 1px solid #000;
}
.chart > svg {
	display: block;
	width: 100%;
	height: 100%;
	font: 10px "DejaVu Sans Condensed", "Noto Sans", sans-serif;
}
.bars {
	stroke: #00ff00;
}
.band {
	fill: none;
	stroke: #3cb371;
}
.one-click {
	position: absolute;
	left: 6px;
	top: 21px;
	width: 187px;
	display: grid;
	grid-template-columns: 43px minmax(0, 1fr) 43px;
	column-gap: 3px;
	color: #fff;
}
.side {
	height: 22px;
	background: linear-gradient(#4747f5, #3434dc);
}
.lots {
	display: flex;
	height: 19px;
	background: #fff;
	color: #000;
}
.lots button {
	width: 19px;
	background: #f0f0f0;
	border: 1px solid #b4b4b4;
	line-height: 12px;
}
.lots svg {
	width: 6px;
	height: 3px;
	vertical-align: middle;
}
.lots input {
	flex: 1;
	width: 0;
	text-align: right;
	padding-right: 4px;
}
.prices {
	grid-column: 1 / -1;
	display: grid;
	grid-template-columns: 1fr 1fr;
	gap: 2px;
}
.prices button {
	height: 34px;
	display: flex;
	align-items: flex-end;
	justify-content: center;
	gap: 3px;
	padding-left: 8px;
	background: linear-gradient(#3030d8, #0000a8);
	border-top: 1px solid #10107c;
}
.prices b {
	font-size: 11px;
	line-height: 20px;
}
.prices span {
	font-size: 28px;
	line-height: 33px;
}
.prices sup {
	align-self: flex-start;
	font-size: 12px;
	font-weight: bold;
}
.chart-tabs {
	height: 22px;
	margin-top: 1px;
	padding-left: 3px;
}
.chart-tabs > button {
	padding: 0 13px;
}
.chart-tabs > .active {
	padding: 0 12px;
}
.chart-tabs > button:first-child {
	padding-right: 17px;
}
.pager {
	margin-left: auto;
	display: flex;
	gap: 14px;
	padding-right: 9px;
}
.pager svg {
	width: 5px;
	height: 8px;
}

/* terminal */
.terminal {
	flex: none;
	height: 243px;
	display: flex;
	padding: 3px 5px 0 0;
	border-bottom: 1px solid #a0a0a0;
}
.spine {
	width: 15px;
	display: flex;
	flex-direction: column;
	align-items: center;
}
.spine button {
	height: 14px;
	line-height: 0;
}
.spine h2 {
	flex: 1;
	width: 13px;
	margin-bottom: 3px;
	padding-top: 2px;
	line-height: 13px;
	writing-mode: vertical-rl;
	transform: rotate(180deg);
	background: linear-gradient(#bccddf, #d6e4f2);
}
.terminal-main {
	flex: 1;
	min-width: 0;
	display: flex;
	flex-direction: column;
	position: relative;
}
.orders-wrap {
	flex: 1;
	min-height: 0;
	display: flex;
	background: #fff;
	border: 1px solid #808080;
	border-width: 1px 0 0 1px;
}
.terminal-main .tabs {
	height: 25px;
}
.terminal-main .tabs > button {
	padding: 0 10px;
}
.terminal-main .tabs sub {
	margin-left: 2px;
	font-size: 10px;
	font-weight: bold;
	line-height: 0;
	color: #f02020;
}
.orders tbody tr:nth-child(even) {
	background: #eaeaea;
}
.orders th i {
	margin-left: 8px;
	color: #666;
}
.orders td svg {
	width: 16px;
	height: 16px;
	margin-right: 3px;
	vertical-align: middle;
}
.orders td button {
	width: 8px;
	margin: 0 3px 0 9px;
	color: #999;
}
.orders td button svg {
	width: 8px;
	height: 8px;
	margin: 0;
}
.orders td:last-child {
	padding-right: 7px;
}
.c-order { width: 106px; }
.c-time { width: 148px; }
.c-type { width: 74px; }
.c-size { width: 57px; }
.c-num { width: 82px; }
.c-profit { width: 123px; }
.watermark {
	position: absolute;
	right: 51px;
	bottom: 9px;
	width: 237px;
	color: #b4b4b4;
	white-space: nowrap;
	pointer-events: none;
}
.watermark p {
	font-size: 14px;
	line-height: 20px;
}
.watermark p:first-child {
	font-size: 19px;
	line-height: 24px;
}

/* status bar */
.statusbar {
	flex: none;
	height: 23px;
	display: flex;
	align-items: center;
	padding: 2px 0 1px;
}
.statusbar span {
	height: 19px;
	line-height: 19px;
	padding-left: 4px;
	border-left: 1px solid #a0a0a0;
	white-space: nowrap;
}
.statusbar .help {
	flex: 1;
	padding-left: 2px;
	border: 0;
}
.profile { width: 116px; }
.time { width: 101px; }
.ohlc { width: 70px; }
.vol { width: 66px; }
.traffic { width: 130px; }
.traffic svg {
	width: 24px;
	height: 14px;
	margin-right: 4px;
	vertical-align: middle;
}

/* taskbar */
.taskbar {
	flex: none;
	height: 40px;
	display: flex;
	background: #050b13;
	color: #fff;
}
.taskbar > button {
	width: 49px;
	display: flex;
	align-items: center;
	justify-content: center;
	position: relative;
}
.taskbar > button svg {
	width: 24px;
	height: 24px;
}
.taskbar .run::after {
	content: "";
	position: absolute;
	bottom: 0;
	left: 4px;
	right: 4px;
	height: 2px;
	background: #76b9ed;
}
.taskbar .current {
	background: #3c4046;
}
.taskbar .current::after {
	left: 0;
	right: 0;
}
.tray {
	margin-left: auto;
	display: flex;
	align-items: center;
	padding-right: 4px;
}
.tray button {
	width: 24px;
	height: 40px;
	line-height: 0;
}
.tray button:first-child {
	margin-right: 12px;
}
.tray svg {
	width: 20px;
	height: 20px;
}
.tray .lang {
	width: 36px;
}
.tray .clock {
	width: 66px;
	display: flex;
	flex-direction: column;
	justify-content: center;
	line-height: 18px;
}
.tray .notes {
	width: 48px;
	padding-right: 8px;
}
.tray::after {
	content: "";
	height: 40px;
	border-left: 1px solid #555;
}
```
FILE: script.js
```js
// market watch rows
const quotes = [
	['USD...', '0.97...', 1],
	['GBP...', '1.26...', 0],
	['EUR...', '1.13...', 0],
	['USDJPY', '107....', 1],
	['USD...', '1.30...', 1],
	['AUD...', '0.70...', 1]
];
document.getElementById('quotes').innerHTML = quotes.map(([name, price, up]) => {
	const cls = up ? 'rise' : 'fall';
	return `<tr><td><svg><use href="#${up ? 'up' : 'down'}"/></svg>${name}</td><td class="${cls}">${price}</td><td class="${cls}">${price}</td></tr>`;
}).join('');

// open orders: id, time, size, symbol, open, s/l, current, swap, profit, comment
const orders = [
	['27561345', '2019.06.20 16:30:00', '0.10', 'cadchfm#', '0.74690', '0.00000', '0.74534', '0.00', '-0.16', 'FxProQuant(Ulver Prime Y)'],
	['28080364', '2019.06.25 10:44:27', '0.30', 'audjpym#', '74.484', '0.000', '75.760', '0.00', '3.55'],
	['28080378', '2019.06.25 10:44:47', '0.30', 'gbpusdm#', '1.27571', '0.00000', '1.26947', '-0.18', '-1.87'],
	['28279523', '2019.06.26 09:13:00', '0.30', 'audjpym#', '74.919', '0.000', '75.760', '0.00', '2.34'],
	['28279544', '2019.06.26 09:13:23', '0.30', 'gbpusdm#', '1.26782', '0.00000', '1.26947', '-0.15', '0.49'],
	['28420666', '2019.06.27 04:28:57', '0.30', 'audjpym#', '75.332', '0.000', '75.760', '0.00', '1.19'],
	['28420673', '2019.06.27 04:29:30', '0.30', 'gbpusdm#', '1.26958', '0.00000', '1.26947', '-0.06', '-0.03'],
	['28428645', '2019.06.27 05:31:57', '0.30', 'audjpym#', '75.566', '0.000', '75.760', '0.00', '0.54'],
	['28494517', '2019.06.27 15:58:28', '0.30', 'audjpym#', '75.475', '0.000', '75.760', '0.00', '0.79'],
	['28494549', '2019.06.27 15:58:50', '0.30', 'gbpusdm#', '1.27125', '0.00000', '1.26947', '-0.06', '-0.54']
];
document.getElementById('orders').innerHTML = orders.map(o => {
	const [id, time, size, symbol, open, stop, now, swap, profit, comment] = o;
	const cells = [time, 'buy', size, symbol, open, stop, stop, now, '0.00', swap];
	return `<tr><td><svg><use href="#doc"/></svg>${id}</td>` +
		cells.map(c => `<td>${c}</td>`).join('') +
		`<td>${profit}<button aria-label="Close order ${id}"><svg><use href="#x"/></svg></button></td><td>${comment || ''}</td></tr>`;
}).join('');

// x, high, low of the daily bars at their turning points
const swings = `192 186 211,195 181 206,199 172 196,203 150 183,225 130 170,240 165 183,246 179 199,250 188 213,252 199 221,
256 206 231,260 199 221,264 181 214,266 170 193,270 172 197,275 170 188,283 172 196,288 160 181,297 150 172,304 170 195,
307 172 187,311 174 199,316 179 209,320 199 224,324 222 249,328 213 238,332 216 240,336 230 265,338 249 284,340 277 305,
344 262 298,350 240 275,353 250 290,357 260 292,362 285 313,366 316 345,368 335 370,370 355 383,374 333 353,377 316 340,
380 337 358,384 322 352,388 335 360,391 363 393,394 357 377,399 360 380,402 341 366,406 333 363,410 356 379,413 363 383,
419 352 373,423 368 393,425 386 410,428 373 391,430 341 391,433 344 366,437 356 381,441 346 371,443 327 351,447 329 353,
453 329 351,455 319 334,459 329 346,463 326 341,466 291 323,469 278 304,471 270 289,477 269 284,479 253 278,482 256 281,
485 276 294,489 271 289,492 254 283,496 266 279,499 241 266,503 229 253,507 214 233,509 221 248,511 233 268,513 251 286,
517 259 279,519 269 309,523 283 303,525 263 293,531 248 269,535 259 279,537 251 278,541 229 256,545 228 248,549 238 268,
552 233 258,557 253 274,561 239 264,567 222 246,571 231 248,575 233 246,579 214 233,581 193 233,584 174 206,589 171 191,
592 163 196,595 178 214,597 209 234,602 217 238,609 199 233,611 192 216,615 203 224,619 211 226,623 218 236,627 228 251,
630 213 239,635 224 241,639 236 262,643 216 239,645 211 228,651 203 223,655 219 236,659 204 229,663 209 239,665 219 244,
669 208 226,673 194 223,677 193 206,679 185 207,685 171 193,689 166 179,693 154 179,697 138 156,701 123 153,703 123 151,
707 141 173,709 156 173,713 181 201,717 189 208,721 178 199,727 171 194,731 174 198,735 183 214,737 191 203,741 163 189,
743 154 174,747 163 181,751 156 168,753 144 168,755 136 156,759 132 151,763 138 159,767 148 179,770 173 189,775 163 179,
783 138 158,787 146 159,790 148 179,795 161 189,799 158 189,801 154 173,805 147 163,809 151 169,811 173 191,815 188 229,
819 219 248,823 219 244,825 226 251,827 239 266,829 263 293,833 294 326,837 281 309,839 283 314,841 298 316,845 291 313,
849 278 301,853 258 283,859 254 278,863 256 273,867 266 279,871 273 299,873 259 283,877 251 266,881 253 268,885 244 263,
887 234 253,891 222 243,895 231 246,901 228 239,905 219 239,909 223 246,911 213 236,913 194 213,917 192 208,921 201 219,
923 211 232,927 214 229,931 213 224,933 201 223,939 206 221,943 204 239,947 226 263,951 248 264,955 233 256,959 228 239,
963 209 228,969 202 219,975 211 231,979 194 209,987 193 201,993 195 206,995 185 208,999 191 214,1003 203 216,1005 208 224,
1009 206 224,1011 228 248,1015 239 263,1019 253 271,1021 259 284,1025 263 281,1029 249 269,1033 235 253,1035 236 259,
1039 259 273,1043 264 278,1047 256 279,1049 269 304,1051 293 316,1055 294 318,1059 293 309,1063 289 304,1067 297 308,
1071 291 308,1075 293 316,1077 308 336,1081 326 341,1083 328 349,1085 318 339,1087 308 326,1089 314 326`
	.split(',').map(s => s.trim().split(' ').map(Number));

const upper = '245,118 250,111 255,109 259,114 M351,178 353,196 358,211 370,219 375,234 385,244 390,256 395,279 398,298 400,306 403,323 413,326 417,336 427,339 440,335 450,323 462,309 466,309 472,278 478,259 482,246 493,236 503,233 508,223 533,221 543,220 548,228 557,226 563,231 570,226 578,224 583,196 592,163 603,166 617,166 627,178 632,202 645,199 657,206 670,201 683,181 693,156 702,124 704,121 712,127 732,128 738,138 745,161 753,151 760,133 767,128 775,132 790,131 802,140 812,140 818,121 827,121 832,109 837,113 842,131 848,176 853,213 859,229 865,250 870,253 877,246 885,244 893,229 903,214 910,213 918,194 943,194 950,185 960,197 970,192 977,193 985,180 1000,188 1008,186 1017,173 1023,171 1030,181 1037,199 1047,231 1063,233 1070,246 1075,263 1082,268 1087,283';
const middle = '192,186 198,182 205,176 M262,176 266,180 272,186 287,188 293,180 M315,172 327,189 335,203 347,238 353,249 362,268 367,280 377,302 385,315 393,335 400,349 405,353 413,354 422,363 428,369 442,367 450,364 462,354 470,336 480,314 488,299 498,281 508,260 523,263 530,259 553,260 567,249 582,239 592,223 600,213 608,211 618,204 630,216 640,225 657,228 672,225 683,213 693,198 702,179 710,169 730,169 737,176 745,184 752,182 763,167 775,166 782,158 790,157 803,163 813,162 823,179 833,209 842,239 848,263 857,279 868,286 885,266 908,246 913,236 923,224 942,215 960,228 977,225 985,220 992,211 1000,205 1010,206 1023,226 1043,249 1052,268 1067,283 1078,299 1087,310';
const lower = '192,211 195,204 203,203 210,206 223,205 230,196 235,176 M244,176 250,205 256,229 260,235 267,232 277,230 288,230 295,218 300,198 305,195 313,193 317,205 325,243 330,253 337,275 340,297 348,315 355,307 362,313 365,323 372,363 377,367 388,392 393,396 400,389 405,382 418,382 422,386 428,399 440,398 450,402 460,401 465,384 468,378 472,384 477,377 482,374 488,359 495,341 500,316 504,302 515,298 523,305 530,299 545,297 557,289 563,272 570,268 577,261 582,276 591,283 600,264 609,256 613,246 618,239 627,246 633,239 640,251 657,249 673,250 680,240 688,243 700,242 705,226 710,212 730,211 738,219 743,208 755,211 768,204 775,193 783,181 790,182 797,186 810,184 815,196 818,219 825,246 828,283 833,316 837,329 841,351 848,351 853,334 858,331 867,318 878,308 887,290 903,289 908,283 912,269 917,268 925,251 943,236 952,256 957,258 983,261 987,256 992,239 998,224 1007,223 1012,233 1022,276 1027,284 1042,289 1047,286 1052,304 1060,321 1070,328 1074,324 1082,342 1087,338';

// one bar every two pixels, interpolated between the swings
let bars = '';
for (let x = 192, i = 0; x <= 1088; x += 2) {
	while (i < swings.length - 2 && swings[i + 1][0] < x) i++;
	const [x0, h0, l0] = swings[i];
	const [x1, h1, l1] = swings[i + 1];
	const t = Math.min(1, Math.max(0, (x - x0) / (x1 - x0)));
	const high = Math.round(h0 + (h1 - h0) * t + Math.sin(x * 2.3) * 3);
	const low = x === 830 ? 409 : Math.round(l0 + (l1 - l0) * t + Math.cos(x * 1.7) * 3);
	bars += `M${x + .5} ${high}V${low}`;
}

const months = [220, 264, 304, 348, 388, 436, 478, 524, 566, 610, 656, 696, 744, 788, 828, 872, 912, 960, 1004, 1050, 1094];
const dates = ['13 Oct 2017', '27 Nov 2017', '12 Jan 2018', '27 Feb 2018', '10 Apr 2018', '24 May 2018', '9 Jul 2018', '22 Aug 2018', '5 Oct 2018', '19 Nov 2018', '4 Jan 2019', '19 Feb 2019', '1 Apr 2019', '15 May 2019', '28 Jun 2019'];
const prices = [['114.710', 118], ['113.570', 151], ['112.430', 184], ['111.290', 217], ['110.150', 250], ['109.010', 283], ['106.730', 349], ['105.590', 382], ['104.450', 415]];
const fibs = [['100.0', 144], ['61.8', 211], ['50.0', 232], ['38.2', 252], ['23.6', 278], ['0.0', 319]];

document.getElementById('chart').innerHTML = `
	<g shape-rendering="crispEdges">
		<path d="${months.map(x => `M${x + .5} 102V418`).join('')}" stroke="#fff" stroke-dasharray="4 3"/>
		<path d="M191 315.5H1318" stroke="#778899"/>
		<path class="bars" d="${bars}"/>
		<path class="band" d="M${upper}"/>
		<path class="band" d="M${middle}"/>
		<path class="band" d="M${lower}"/>
		<path d="M811 145L841 318" stroke="#f00" stroke-dasharray="4 3"/>
		<path d="${fibs.map(f => `M810 ${f[1] + .5}H1109`).join('')}" stroke="#ff0"/>
		<path d="M191.5 418.5V101.500H1318.500V418.500z" fill="none" stroke="#fff"/>
		<path d="${dates.map((d, i) => `M${192.5 + i * 64} 419v3`).join('')}${prices.map(p => `M1319 ${p[1] + .5}h2`).join('')}" stroke="#fff"/>
		<path d="M1320 310h41v11h-41z" fill="#fff"/>
		<path d="M1086 102h11l-5.500 5z" fill="#778899"/>
		<path d="M195 111h7l-3.500-4z" fill="#fff"/>
	</g>
	<g fill="#fff">
		<text x="207" y="113">USDJPYm#,Daily</text><text x="289" y="113">107.766 107.933 107.598 107.909</text>
		${dates.map((d, i) => `<text x="${191 + i * 64}" y="431">${d}</text>`).join('')}
		${prices.map(p => `<text x="1324" y="${p[1] + 4}">${p[0]}</text>`).join('')}
	</g>
	<text x="1324" y="319">107.909</text>
	<g fill="#ff0" text-anchor="end">${fibs.map(f => `<text x="1109" y="${f[1] - 2}">${f[0]}</text>`).join('')}</g>
	<rect x="778.5" y="116.5" width="377" height="236" rx="13" fill="none" stroke="#ed1c24" stroke-width="5"/>`;
```
